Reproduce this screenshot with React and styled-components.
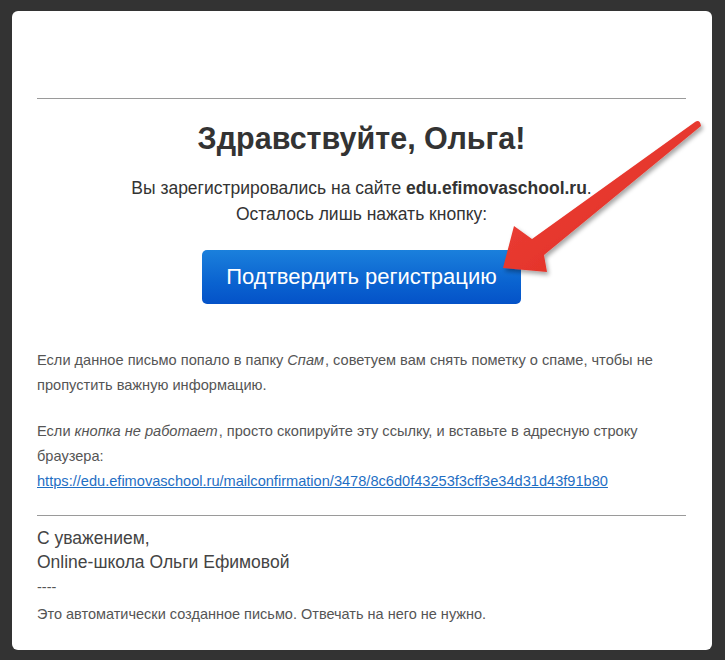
import React from "react";
import styled, { createGlobalStyle } from "styled-components";

const Global = createGlobalStyle`
  html, body { margin: 0; padding: 0; background: #333333; }
  body { font-family: "Liberation Sans", Arial, sans-serif; }
`;

const Page = styled.div`
  width: 725px;
  height: 660px;
  padding: 11px 13px 10px 12px;
  box-sizing: border-box;
  background: #333333;
`;

const Card = styled.div`
  position: relative;
  height: 100%;
  background: #ffffff;
  border-radius: 6px;
  padding: 87px 26px 0 25px;
  box-sizing: border-box;
`;

const Rule = styled.hr`
  margin: 0;
  border: 0;
  border-top: 1px solid #9a9a9a;
`;

const Hero = styled.section`
  display: flex;
  flex-direction: column;
  align-items: center;
  text-align: center;
  color: #333;
`;

const Title = styled.h1`
  margin: 22px 0 0;
  font-size: 30.5px;
  line-height: 34px;
  font-weight: bold;
  color: #333;
`;

const Lead = styled.p`
  margin: 20px 0 0;
  font-size: 17.5px;
  line-height: 26px;
`;

const ConfirmButton = styled.a`
  display: flex;
  align-items: center;
  justify-content: center;
  margin-top: 23px;
  width: 319px;
  height: 54px;
  border-radius: 5px;
  background: linear-gradient(#1b80dc, #0a63d0 60%, #0452c8);
  color: #fff;
  font-size: 22px;
  text-decoration: none;
`;

const Body = styled.div`
  margin-top: 44px;
  color: #555;
  font-size: 14.6px;
  line-height: 25px;
`;

const Para = styled.p`
  margin: 0 0 21px;
`;

const Em = styled.i`
  padding-right: 1px;
`;

const Link = styled.a`
  color: #1f6fc4;
  text-decoration: underline;
`;

const Footer = styled.div`
  margin-top: 4px;
  padding-top: 10px;
  border-top: 1px solid #9a9a9a;
  color: #444;
`;

const Sign = styled.div`
  font-size: 17.5px;
  line-height: 24px;
`;

const Note = styled.div`
  font-size: 14.5px;
  line-height: 27px;
  color: #555;
`;

const Arrow = styled.svg`
  position: absolute;
  left: 0;
  top: 0;
  width: 700px;
  height: 639px;
  pointer-events: none;
  overflow: visible;
`;

export default function App() {
  return (
    <>
      <Global />
      <Page>
        <Card>
          <Rule />
          <Hero>
            <Title>Здравствуйте, Ольга!</Title>
            <Lead>
              Вы зарегистрировались на сайте <b>edu.efimovaschool.ru</b>.
              <br />
              Осталось лишь нажать кнопку:
            </Lead>
            <ConfirmButton href="#">Подтвердить регистрацию</ConfirmButton>
          </Hero>
          <Body>
            <Para>
              Если данное письмо попало в папку <Em>Спам</Em>, советуем вам снять
              пометку о спаме, чтобы не пропустить важную информацию.
            </Para>
            <Para>
              Если <Em>кнопка не работает</Em>, просто скопируйте эту ссылку, и
              вставьте в адресную строку браузера:
              <br />
              <Link href="#">
                https://edu.efimovaschool.ru/mailconfirmation/3478/8c6d0f43253f3cff3e34d31d43f91b80
              </Link>
            </Para>
          </Body>
          <Footer>
            <Sign>С уважением,</Sign>
            <Sign>Online-школа Ольги Ефимовой</Sign>
            <Note>----</Note>
            <Note>Это автоматически созданное письмо. Отвечать на него не нужно.</Note>
          </Footer>
          <Arrow viewBox="0 0 700 639">
            <defs>
              <linearGradient id="arrowFill" x1="0" y1="0" x2="1" y2="1">
                <stop offset="0" stopColor="#f0453a" />
                <stop offset="1" stopColor="#dd2a22" />
              </linearGradient>
              <filter id="arrowShadow" x="-20%" y="-20%" width="140%" height="140%">
                <feDropShadow dx="2" dy="3" stdDeviation="2" floodColor="#000" floodOpacity="0.35" />
              </filter>
            </defs>
            <path
              d="M683 111 Q688 108 689 115 L532 244 L535 261 L491 257 L502 215 L520 228 Z"
              fill="url(#arrowFill)"
              filter="url(#arrowShadow)"
            />
          </Arrow>
        </Card>
      </Page>
    </>
  );
}
